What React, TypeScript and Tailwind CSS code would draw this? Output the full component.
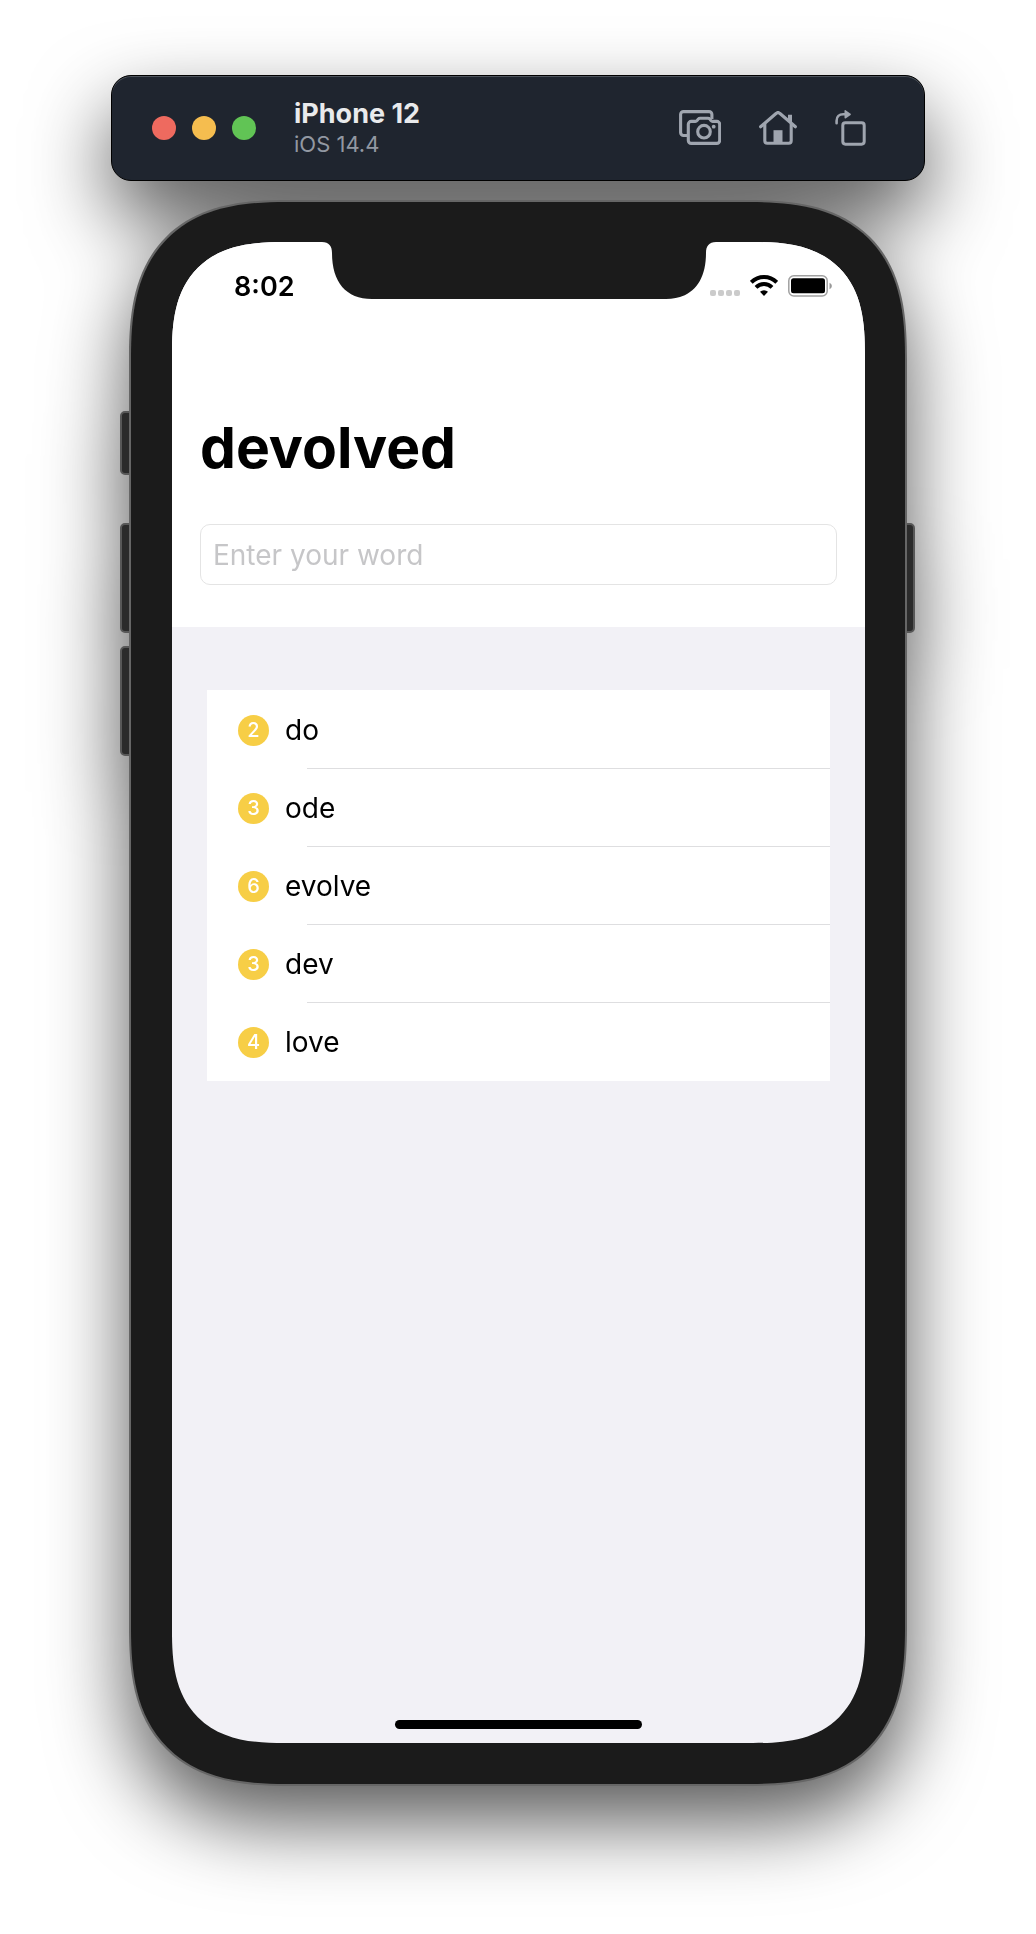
import React from "react";

const words = ["do", "ode", "evolve", "dev", "love"];

function ScreenshotIcon() {
  return (
    <svg viewBox="0 0 42 35" className="h-[35px] w-[42px]" fill="none" stroke="currentColor" strokeWidth="3.1" strokeLinejoin="round">
      <path d="M8.500 25.500H4.500a2.900 2.900 0 0 1-2.900-2.900V4.500a2.900 2.900 0 0 1 2.900-2.900H30a2.900 2.900 0 0 1 2.900 2.900V9" />
      <path d="M12.200 11.400h4.200c.7 0 1.200-.3 1.600-.8l1.200-1.500c.5-.6 1.100-.9 1.900-.9h7.800c.8 0 1.400.3 1.900.9l1.200 1.500c.4.5.9.8 1.600.8h4.200a2.900 2.900 0 0 1 2.900 2.900v16.200a2.900 2.900 0 0 1-2.900 2.900H12.200a2.900 2.900 0 0 1-2.900-2.900V14.300a2.900 2.900 0 0 1 2.900-2.900z" />
      <circle cx="25" cy="21.700" r="6.300" />
      <circle cx="34.700" cy="16.700" r="1.900" fill="currentColor" stroke="none" />
    </svg>
  );
}

function HomeIcon() {
  return (
    <svg viewBox="0 0 38 34" className="h-[34px] w-[38px]" fill="none" stroke="currentColor" strokeWidth="3.1" strokeLinecap="round" strokeLinejoin="round">
      <path d="M1.600 15.800 17.300 2.300c1-.9 2.400-.9 3.400 0l15.700 13.500" />
      <path d="M5.800 13v16.800a2.500 2.500 0 0 0 2.500 2.500h21.400a2.500 2.500 0 0 0 2.500-2.500V13" />
      <path d="M29 3.800h4v8.500l-4-3.400z" fill="currentColor" stroke="none" />
      <path d="M14.500 19.200h9V32h-9z" fill="currentColor" stroke="none" />
    </svg>
  );
}

function RotateIcon() {
  return (
    <svg viewBox="0 0 31 36" className="h-9 w-[31px]" fill="none" stroke="currentColor" strokeWidth="3" strokeLinecap="round">
      <rect x="7.800" y="12.800" width="21.400" height="21.400" rx="2.600" />
      <path d="M1.600 13.200v-2.500c0-4 2.600-6.400 6.600-6.400h2" strokeWidth="2.600" />
      <path d="M9.500.8c0-.6.600-.9 1.100-.6l5 3.500c.4.300.4.900 0 1.200l-5 3.500c-.5.300-1.100 0-1.100-.6z" fill="currentColor" stroke="none" />
    </svg>
  );
}

function WifiIcon() {
  return (
    <svg viewBox="0 0 28 21" className="h-[21px] w-7" fill="none" stroke="#000" strokeWidth="3.900">
      <path d="M1.300 7.300a18 18 0 0 1 25.400 0" />
      <path d="M6 12.300a11.300 11.300 0 0 1 16 0" />
      <path d="M14 21l-4-4.200a5.800 5.800 0 0 1 8 0z" fill="#000" stroke="none" />
    </svg>
  );
}

function BatteryIcon() {
  return (
    <svg viewBox="0 0 44 22" className="h-[22px] w-11">
      <rect x=".8" y=".8" width="38.400" height="20.200" rx="5" fill="none" stroke="#a0a0a0" strokeWidth="1.500" />
      <rect x="3" y="3.300" width="34" height="15" rx="2.500" fill="#000" />
      <path d="M41.500 7.800c1.700.8 2.300 1.900 2.300 3.200s-.6 2.400-2.300 3.200z" fill="#999" />
    </svg>
  );
}

function Toolbar() {
  return (
    <header className="flex h-[106px] w-full max-w-[814px] items-center rounded-[20px] border border-black bg-[#1f252f] pr-[58px] pl-10 shadow-[inset_0_1px_0_#4d535b]">
      <div className="flex gap-4">
        <button aria-label="Close" className="size-6 rounded-full bg-[#ee6a5f]" />
        <button aria-label="Minimize" className="size-6 rounded-full bg-[#f5bd4f]" />
        <button aria-label="Zoom" className="size-6 rounded-full bg-[#61c455]" />
      </div>
      <div className="ml-[38px]">
        <h2 className="text-[27px] leading-8 font-bold text-[#e9eaec]">iPhone 12</h2>
        <p className="text-[22px] leading-7 text-[#9298a2]">iOS 14.4</p>
      </div>
      <div className="ml-auto flex items-center gap-[38px] pb-px text-[#9fa5af]">
        <button aria-label="Screenshot"><ScreenshotIcon /></button>
        <button aria-label="Home"><HomeIcon /></button>
        <button aria-label="Rotate"><RotateIcon /></button>
      </div>
    </header>
  );
}

function StatusBar() {
  return (
    <div className="relative flex h-[89px] items-center justify-between pr-[33px] pl-[62px]">
      <svg viewBox="0 0 394 57" className="absolute top-0 left-1/2 h-[57px] w-[394px] -translate-x-1/2" fill="#1b1b1b">
        <path d="M0 0C7 0 10 4 10 11C10 40 24 57 50 57H344C370 57 384 40 384 11C384 4 387 0 394 0z" />
      </svg>
      <time className="text-[27px] leading-8 font-semibold">8:02</time>
      <div className="flex items-center gap-[10px] pb-[2px]">
        <div className="flex gap-[2px] pt-[14px]">
          <i className="size-[6px] rounded-[2px] bg-[#cbcbcb]" />
          <i className="size-[6px] rounded-[2px] bg-[#cbcbcb]" />
          <i className="size-[6px] rounded-[2px] bg-[#cbcbcb]" />
          <i className="size-[6px] rounded-[2px] bg-[#cbcbcb]" />
        </div>
        <WifiIcon />
        <BatteryIcon />
      </div>
    </div>
  );
}

function Screen() {
  return (
    <main className="flex min-h-[1501px] flex-col overflow-hidden rounded-[88px] bg-[#f2f1f6] supports-[corner-shape:squircle]:rounded-[112px] supports-[corner-shape:squircle]:[corner-shape:superellipse(1.4)]">
      <section className="bg-white pb-[42px]">
        <StatusBar />
        <div className="px-7 pt-[81px]">
          <h1 className="text-[57px] leading-[72px] font-bold">devolved</h1>
          <input
            type="text"
            aria-label="Enter your word"
            placeholder="Enter your word"
            className="mt-10 block h-[61px] w-full rounded-[10px] border border-[#e4e4e4] bg-white px-3 text-[28px] placeholder:text-[#c6c6c8]"
          />
        </div>
      </section>
      <ul className="mx-[35px] mt-[63px] bg-white pt-px">
        {words.map((word) => (
          <li
            key={word}
            className="relative flex h-[78px] items-center pl-[31px] after:absolute after:right-0 after:bottom-0 after:left-[100px] after:h-px after:bg-[#dedee0] last:after:hidden"
          >
            <span className="flex size-[31px] items-center justify-center rounded-full bg-[#f7ce46] text-xl leading-none font-medium text-white">
              {word.length}
            </span>
            <span className="ml-4 text-[28px] leading-9">{word}</span>
          </li>
        ))}
      </ul>
      <div className="mx-auto mt-auto mb-[14px] h-[9px] w-[247px] rounded-full bg-black" />
    </main>
  );
}

const sideKey = "absolute w-3 border-2 border-[#585858] bg-[#2b2b2b]";

function Phone() {
  return (
    <div className="relative mt-[19px] w-full max-w-[778px]">
      <div className={`${sideKey} top-[211px] -left-[9px] h-16 rounded-l-[5px]`} />
      <div className={`${sideKey} top-[323px] -left-[9px] h-[110px] rounded-l-[5px]`} />
      <div className={`${sideKey} top-[446px] -left-[9px] h-[110px] rounded-l-[5px]`} />
      <div className={`${sideKey} top-[323px] -right-[8px] h-[110px] rounded-r-[5px]`} />
      <div className="relative rounded-[128px] border-2 border-[#666] bg-[#1b1b1b] pt-10 pr-10 pb-[41px] pl-[41px] supports-[corner-shape:squircle]:rounded-[160px] supports-[corner-shape:squircle]:[corner-shape:superellipse(1.4)]">
        <Screen />
      </div>
    </div>
  );
}

export default function App() {
  return (
    <div className="min-h-screen overflow-hidden bg-white font-['Inter',sans-serif] text-black">
      <div className="flex flex-col items-center pt-[75px] pb-[148px] [filter:drop-shadow(0_36px_40px_rgba(0,0,0,0.65))]">
        <Toolbar />
        <Phone />
      </div>
    </div>
  );
}
